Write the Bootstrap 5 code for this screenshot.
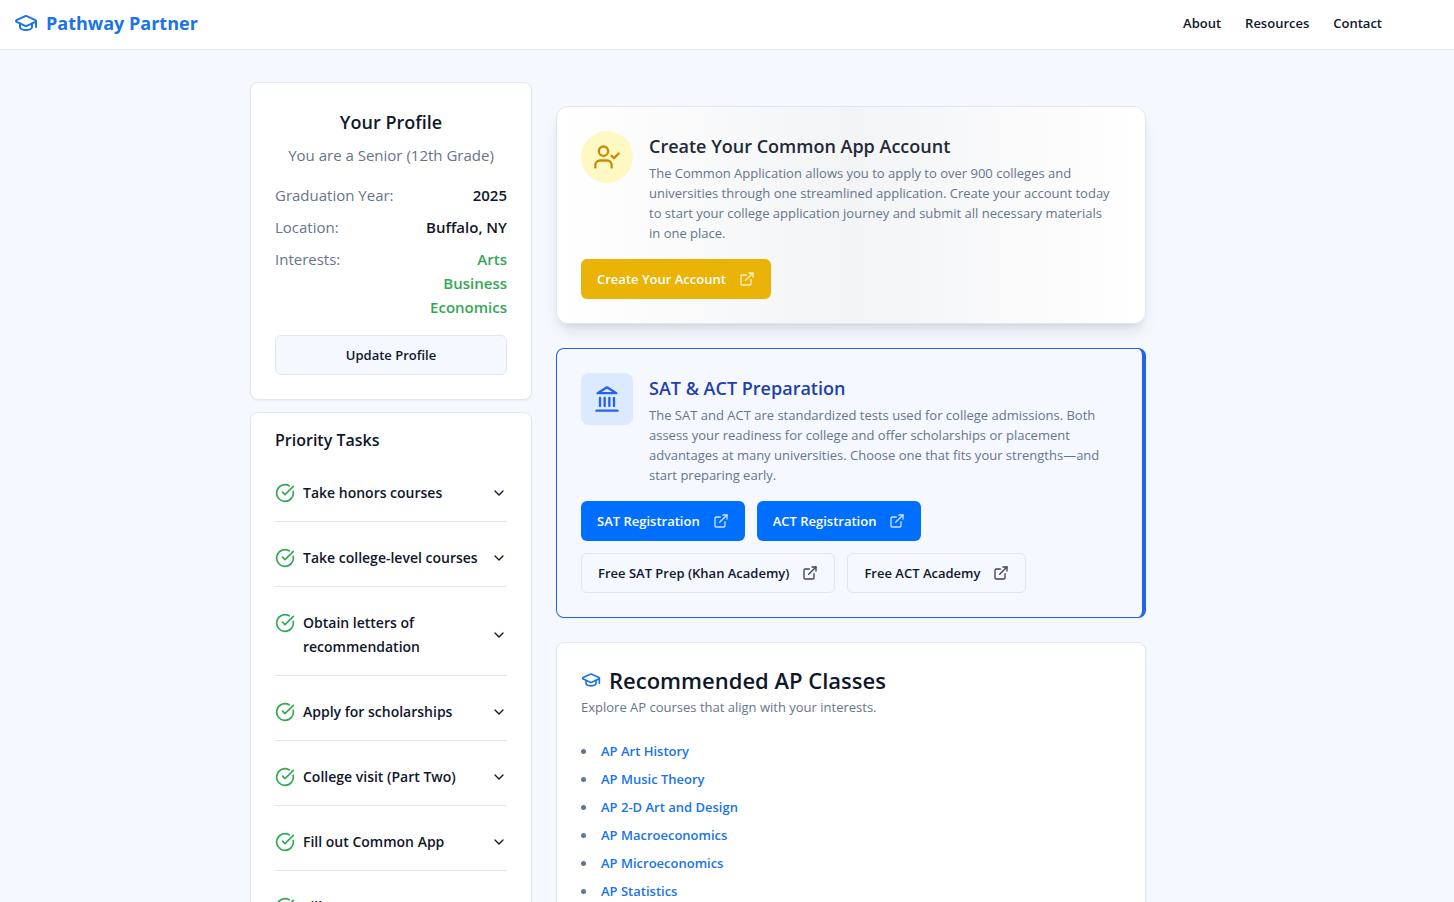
<!DOCTYPE html>
<html lang="en">
<head>
<meta charset="utf-8">
<meta name="viewport" content="width=device-width, initial-scale=1">
<title>Pathway Partner</title>
<link href="https://cdn.jsdelivr.net/npm/bootstrap@5.3.0/dist/css/bootstrap.min.css" rel="stylesheet">
<style>
  :root {
    --ink: #0f172a; --muted: #65758b; --line: #e1e7ef; --page: #f5f8ff;
    --brand: #1a73e8; --good: #34a853;
  }
  body { font-family: "Open Sans", "Noto Sans", sans-serif; font-size: 15px; line-height: 24px; color: var(--ink); background: var(--page); }
  svg { fill: none; stroke: currentColor; stroke-width: 2; stroke-linecap: round; stroke-linejoin: round; flex-shrink: 0; }
  .i16 { width: 16px; height: 16px; }
  .i20 { width: 20px; height: 20px; }
  .i24 { width: 24px; height: 24px; }
  .i28 { width: 28px; height: 28px; }
  a { text-decoration: none; }
  .site-header { background: #fff; border-bottom: 1px solid var(--line); padding: 0 72px 3px 14px; min-height: 50px; }
  .brand-link, .brand-link:hover { color: var(--brand); font-size: 18px; font-weight: 700; }
  .site-nav a { color: var(--ink); font-size: 13px; font-weight: 600; line-height: 20px; }
  main { padding: 32px 58px 32px 0; }
  .page-wrap { max-width: 896px; }
  .columns { grid-template-columns: minmax(0, 282fr) minmax(0, 590fr); column-gap: 24px; }
  .panel { background: #fff; border: 1px solid var(--line); border-radius: 8px; box-shadow: 0 1px 2px rgba(0,0,0,.05); padding: 24px; }
  .title { font-size: 18px; line-height: 30px; font-weight: 600; margin: 0 0 2px; }
  .subtle { color: var(--muted); margin: 6px 0 16px; }
  .copy { color: var(--muted); font-size: 13px; line-height: 20px; margin: 0; padding-right: 8px; }
  dt { font-weight: 400; color: var(--muted); }
  dd { font-weight: 600; margin: 0; text-align: right; }
  .good { color: var(--good); }
  .act { height: 40px; border-radius: 6px; padding: 0 16px; font-size: 13px; line-height: 20px; font-weight: 600; display: inline-flex; align-items: center; justify-content: center; gap: 13px; white-space: nowrap; }
  .act svg { opacity: .8; }
  .act-line, .act-line:hover { background: var(--page); border: 1px solid var(--line); color: var(--ink); }
  .act-blue, .act-blue:hover { background: #006fff; color: #fff; border: 0; }
  .act-gold, .act-gold:hover { background: #eab308; color: #fff; border: 0; }
  .link-set { gap: 12px; }
  .tasks { padding: 12px 24px 24px; margin-top: 12px; }
  .tasks .title { font-size: 16px; }
  .tasks li { border-bottom: 1px solid var(--line); }
  .tasks button { padding: 24px 0 16px; border: 0; background: none; color: var(--ink); font-size: 14px; line-height: 24px; font-weight: 600; }
  .tasks .good { margin-top: 2px; }
  .feature { border-radius: 12px; background: linear-gradient(90deg, #fff, #f3f4f6, #fff); box-shadow: 0 10px 15px -3px rgba(0,0,0,.1), 0 4px 6px -4px rgba(0,0,0,.1); }
  .feature .title { color: #1f2937; }
  .tests { background: var(--page); border-color: #2563eb; border-right-width: 4px; }
  .tests .title { color: #1e40af; }
  .emblem { width: 52px; height: 52px; flex-shrink: 0; }
  .emblem-gold { background: #fef9c3; color: #ca8a04; border-radius: 50%; }
  .emblem-blue { background: #dbeafe; color: #2563eb; border-radius: 8px; }
  .big-title { font-size: 22px; line-height: 26px; font-weight: 600; margin: 0 0 4px; }
  .big-title svg { color: var(--brand); }
  .courses { list-style: none; padding: 0; margin: 24px 0 0; font-size: 13px; line-height: 20px; }
  .courses li { display: flex; align-items: center; gap: 15px; }
  .courses li::before { content: ""; width: 5px; height: 5px; border-radius: 50%; background: var(--muted); }
  .courses a { color: var(--brand); font-weight: 600; }
</style>
</head>
<body>
<svg width="0" height="0" class="d-none" aria-hidden="true">
  <symbol id="cap" viewBox="0 0 24 24"><path d="M21.42 10.922a1 1 0 0 0-.019-1.838L12.83 5.18a2 2 0 0 0-1.66 0L2.6 9.08a1 1 0 0 0 0 1.832l8.57 3.908a2 2 0 0 0 1.66 0z"/><path d="M22 10v6"/><path d="M6 12.5V16a6 3 0 0 0 12 0v-3.5"/></symbol>
  <symbol id="check" viewBox="0 0 24 24"><path d="M21.801 10A10 10 0 1 1 17 3.335"/><path d="m9 11 3 3L22 4"/></symbol>
  <symbol id="chevron" viewBox="0 0 24 24"><path d="m6 9 6 6 6-6"/></symbol>
  <symbol id="external" viewBox="0 0 24 24"><path d="M15 3h6v6"/><path d="M10 14 21 3"/><path d="M18 13v6a2 2 0 0 1-2 2H5a2 2 0 0 1-2-2V8a2 2 0 0 1 2-2h6"/></symbol>
</svg>

<header class="site-header d-flex align-items-center justify-content-between">
  <a class="brand-link d-flex align-items-center gap-2" href="#"><svg class="i24"><use href="#cap"/></svg>Pathway Partner</a>
  <nav class="site-nav d-flex gap-4" aria-label="Main">
    <a href="#">About</a><a href="#">Resources</a><a href="#">Contact</a>
  </nav>
</header>

<main>
  <div class="page-wrap mx-auto">
    <div class="columns d-grid">
      <div>
        <section class="panel">
          <h2 class="title text-center">Your Profile</h2>
          <p class="subtle text-center">You are a Senior (12th Grade)</p>
          <dl class="d-flex flex-column gap-2 mb-3">
            <div class="d-flex justify-content-between"><dt>Graduation Year:</dt><dd>2025</dd></div>
            <div class="d-flex justify-content-between"><dt>Location:</dt><dd>Buffalo, NY</dd></div>
            <div class="d-flex justify-content-between"><dt>Interests:</dt><dd class="good">Arts<br>Business<br>Economics</dd></div>
          </dl>
          <button type="button" class="btn act act-line w-100">Update Profile</button>
        </section>

        <section class="panel tasks">
          <h2 class="title">Priority Tasks</h2>
          <ul class="list-unstyled mb-0">
            <li><button type="button" class="w-100 d-flex align-items-center justify-content-between text-start"><span class="d-flex gap-2"><svg class="i20 good"><use href="#check"/></svg><span>Take honors courses</span></span><svg class="i16"><use href="#chevron"/></svg></button></li>
            <li><button type="button" class="w-100 d-flex align-items-center justify-content-between text-start"><span class="d-flex gap-2"><svg class="i20 good"><use href="#check"/></svg><span>Take college-level courses</span></span><svg class="i16"><use href="#chevron"/></svg></button></li>
            <li><button type="button" class="w-100 d-flex align-items-center justify-content-between text-start"><span class="d-flex gap-2"><svg class="i20 good"><use href="#check"/></svg><span>Obtain letters of recommendation</span></span><svg class="i16"><use href="#chevron"/></svg></button></li>
            <li><button type="button" class="w-100 d-flex align-items-center justify-content-between text-start"><span class="d-flex gap-2"><svg class="i20 good"><use href="#check"/></svg><span>Apply for scholarships</span></span><svg class="i16"><use href="#chevron"/></svg></button></li>
            <li><button type="button" class="w-100 d-flex align-items-center justify-content-between text-start"><span class="d-flex gap-2"><svg class="i20 good"><use href="#check"/></svg><span>College visit (Part Two)</span></span><svg class="i16"><use href="#chevron"/></svg></button></li>
            <li><button type="button" class="w-100 d-flex align-items-center justify-content-between text-start"><span class="d-flex gap-2"><svg class="i20 good"><use href="#check"/></svg><span>Fill out Common App</span></span><svg class="i16"><use href="#chevron"/></svg></button></li>
            <li><button type="button" class="w-100 d-flex align-items-center justify-content-between text-start"><span class="d-flex gap-2"><svg class="i20 good"><use href="#check"/></svg><span>Fill out FAFSA</span></span><svg class="i16"><use href="#chevron"/></svg></button></li>
          </ul>
        </section>
      </div>

      <div class="pt-4 d-flex flex-column gap-4">
        <section class="panel feature">
          <div class="d-flex gap-3 mb-3">
            <div class="emblem emblem-gold d-flex align-items-center justify-content-center"><svg class="i28" viewBox="0 0 24 24"><path d="m16 11 2 2 4-4"/><path d="M16 21v-2a4 4 0 0 0-4-4H6a4 4 0 0 0-4 4v2"/><circle cx="9" cy="7" r="4"/></svg></div>
            <div>
              <h2 class="title">Create Your Common App Account</h2>
              <p class="copy">The Common Application allows you to apply to over 900 colleges and universities through one streamlined application. Create your account today to start your college application journey and submit all necessary materials in one place.</p>
            </div>
          </div>
          <a href="#" class="btn act act-gold">Create Your Account<svg class="i16"><use href="#external"/></svg></a>
        </section>

        <section class="panel tests">
          <div class="d-flex gap-3 mb-3">
            <div class="emblem emblem-blue d-flex align-items-center justify-content-center"><svg class="i28" viewBox="0 0 24 24"><path d="M3 22h18M6 18v-7M10 18v-7M14 18v-7M18 18v-7"/><path d="m12 2 8 5H4z"/></svg></div>
            <div>
              <h2 class="title">SAT &amp; ACT Preparation</h2>
              <p class="copy">The SAT and ACT are standardized tests used for college admissions. Both assess your readiness for college and offer scholarships or placement advantages at many universities. Choose one that fits your strengths—and start preparing early.</p>
            </div>
          </div>
          <div class="link-set d-flex flex-wrap">
            <a href="#" class="btn act act-blue">SAT Registration<svg class="i16"><use href="#external"/></svg></a>
            <a href="#" class="btn act act-blue">ACT Registration<svg class="i16"><use href="#external"/></svg></a>
            <a href="#" class="btn act act-line">Free SAT Prep (Khan Academy)<svg class="i16"><use href="#external"/></svg></a>
            <a href="#" class="btn act act-line">Free ACT Academy<svg class="i16"><use href="#external"/></svg></a>
          </div>
        </section>

        <section class="panel">
          <h2 class="big-title d-flex align-items-center gap-2"><svg class="i20"><use href="#cap"/></svg>Recommended AP Classes</h2>
          <p class="copy">Explore AP courses that align with your interests.</p>
          <ul class="courses d-flex flex-column gap-2">
            <li><a href="#">AP Art History</a></li>
            <li><a href="#">AP Music Theory</a></li>
            <li><a href="#">AP 2-D Art and Design</a></li>
            <li><a href="#">AP Macroeconomics</a></li>
            <li><a href="#">AP Microeconomics</a></li>
            <li><a href="#">AP Statistics</a></li>
          </ul>
        </section>
      </div>
    </div>
  </div>
</main>
<script src="https://cdn.jsdelivr.net/npm/bootstrap@5.3.0/dist/js/bootstrap.bundle.min.js"></script>
</body>
</html>
